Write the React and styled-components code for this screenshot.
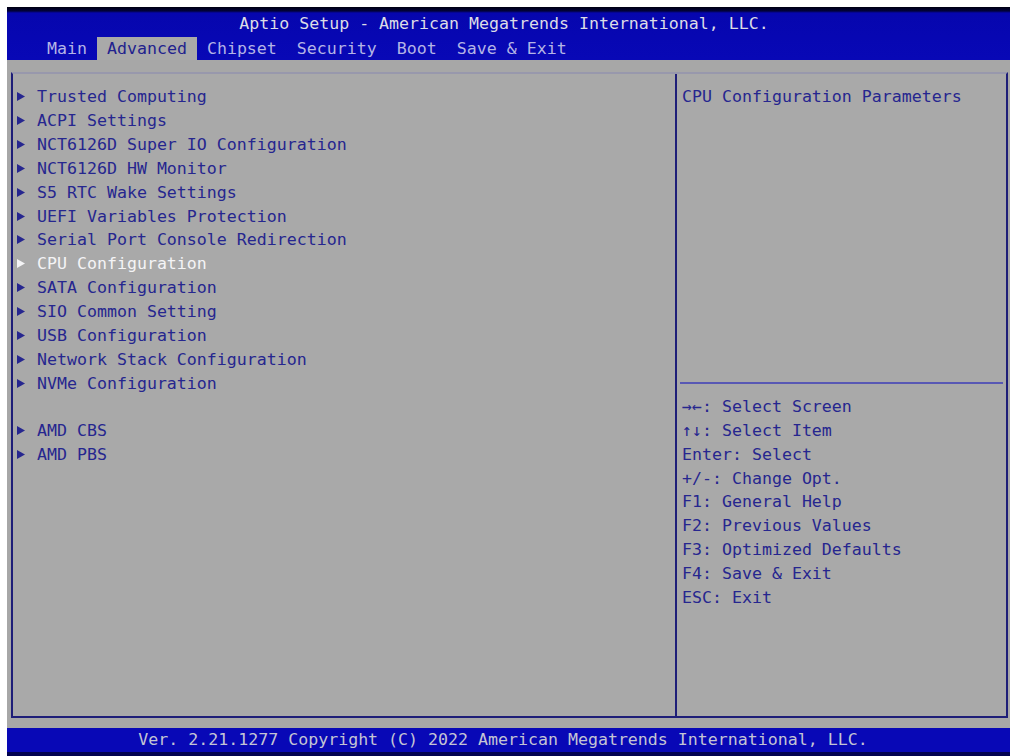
import React from "react";
import styled, { createGlobalStyle } from "styled-components";

const GlobalStyle = createGlobalStyle`
  html, body { margin: 0; padding: 0; background: #ffffff; }
  * { box-sizing: border-box; }
`;

const FONT = `"DejaVu Sans Mono", "Liberation Mono", monospace`;

const Page = styled.div`
  padding: 7px 0 0 7px;
  width: 1010px;
  height: 756px;
  overflow: hidden;
`;

const Screen = styled.div`
  width: 1003px;
  height: 749px;
  background: #a7a7a7;
  display: flex;
  flex-direction: column;
  font-family: ${FONT};
  font-size: 16.6px;
`;

const Header = styled.header`
  height: 53px;
  padding-top: 5px;
  background: linear-gradient(
    to bottom,
    #000010 0px,
    #02023a 4px,
    #0606ae 6px,
    #0808b6 100%
  );
  display: flex;
  flex-direction: column;
`;

const Title = styled.div`
  height: 24px;
  line-height: 24px;
  margin-bottom: 1px;
  text-align: center;
  padding-right: 9px;
  color: #dcdce6;
  white-space: pre;
`;

const TabBar = styled.nav`
  display: flex;
  height: 23px;
  padding-left: 30px;
`;

const Tab = styled.div`
  padding: 0 10px;
  line-height: 23px;
  white-space: pre;
  color: ${(p) => (p.$active ? "#22228e" : "#b4b4e6")};
  background: ${(p) => (p.$active ? "#a9a9a9" : "transparent")};
`;

const Body = styled.main`
  flex: 1;
  padding: 12px 2px 10px 4px;
  display: flex;
`;

const Panel = styled.div`
  flex: 1;
  display: flex;
  border-left: 2px solid #1e1e78;
  border-right: 2px solid #1e1e78;
  border-bottom: 2px solid #1e1e78;
  border-top: 2px solid #9898ac;
  background: #a9a9a9;
`;

const MenuPane = styled.section`
  width: 664px;
  border-right: 2px solid #1e1e78;
  padding: 11px 0 0 4px;
`;

const MenuRow = styled.div`
  display: flex;
  align-items: center;
  height: 23.85px;
  color: ${(p) => (p.$selected ? "#f4f4f6" : "#26268f")};
  white-space: pre;
`;

const Arrow = styled.span`
  width: 20px;
  display: flex;
  align-items: center;
  svg { display: block; }
`;

const Spacer = styled.div`
  height: 23.85px;
`;

const HelpPane = styled.aside`
  flex: 1;
  display: flex;
  flex-direction: column;
`;

const Description = styled.div`
  height: 308px;
  padding: 11px 0 0 5px;
  color: #26268f;
  line-height: 23.85px;
  white-space: pre;
`;

const Divider = styled.div`
  height: 2px;
  margin: 0 3px;
  background: #5858b4;
`;

const HelpList = styled.div`
  padding: 11px 0 0 5px;
`;

const HelpLine = styled.div`
  height: 23.85px;
  line-height: 23.85px;
  color: #26268f;
  white-space: pre;
`;

const Footer = styled.footer`
  height: 28px;
  line-height: 24px;
  background: #0808b6;
  border-bottom: 4px solid #020250;
  color: #c4c4d4;
  text-align: center;
  padding-right: 11px;
  white-space: pre;
`;

const Triangle = ({ color }) => (
  <svg width="8" height="9" viewBox="0 0 8 9">
    <polygon points="0,0 8,4.5 0,9" fill={color} />
  </svg>
);

const tabs = ["Main", "Advanced", "Chipset", "Security", "Boot", "Save & Exit"];

const menu = [
  "Trusted Computing",
  "ACPI Settings",
  "NCT6126D Super IO Configuration",
  "NCT6126D HW Monitor",
  "S5 RTC Wake Settings",
  "UEFI Variables Protection",
  "Serial Port Console Redirection",
  "CPU Configuration",
  "SATA Configuration",
  "SIO Common Setting",
  "USB Configuration",
  "Network Stack Configuration",
  "NVMe Configuration",
  null,
  "AMD CBS",
  "AMD PBS",
];

const help = [
  "→←: Select Screen",
  "↑↓: Select Item",
  "Enter: Select",
  "+/-: Change Opt.",
  "F1: General Help",
  "F2: Previous Values",
  "F3: Optimized Defaults",
  "F4: Save & Exit",
  "ESC: Exit",
];

export default function App() {
  const selected = "CPU Configuration";
  return (
    <>
      <GlobalStyle />
      <Page>
        <Screen>
          <Header>
            <Title>Aptio Setup - American Megatrends International, LLC.</Title>
            <TabBar>
              {tabs.map((t) => (
                <Tab key={t} $active={t === "Advanced"}>
                  {t}
                </Tab>
              ))}
            </TabBar>
          </Header>
          <Body>
            <Panel>
              <MenuPane>
                {menu.map((m, i) =>
                  m === null ? (
                    <Spacer key={i} />
                  ) : (
                    <MenuRow key={m} $selected={m === selected}>
                      <Arrow>
                        <Triangle color={m === selected ? "#f4f4f6" : "#26268f"} />
                      </Arrow>
                      {m}
                    </MenuRow>
                  )
                )}
              </MenuPane>
              <HelpPane>
                <Description>CPU Configuration Parameters</Description>
                <Divider />
                <HelpList>
                  {help.map((h) => (
                    <HelpLine key={h}>{h}</HelpLine>
                  ))}
                </HelpList>
              </HelpPane>
            </Panel>
          </Body>
          <Footer>Ver. 2.21.1277 Copyright (C) 2022 American Megatrends International, LLC.</Footer>
        </Screen>
      </Page>
    </>
  );
}
